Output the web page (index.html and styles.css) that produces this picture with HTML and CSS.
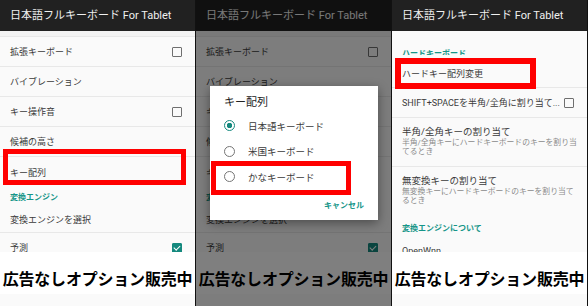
FILE: index.html
```html
<!DOCTYPE html>
<html lang="ja">
<head>
    <meta charset="UTF-8">
    <title>日本語フルキーボード For Tablet</title>
    <link rel="stylesheet" href="styles.css">
</head>
<body>
    <div class="strip">
        <!-- shot 1: settings list -->
        <div class="shot">
            <div class="appbar">日本語フルキーボード For Tablet</div>
            <div class="prefs">
                <div class="spacer"></div>
                <div class="pref">拡張キーボード<span class="check"></span></div>
                <div class="pref">バイブレーション</div>
                <div class="pref">キー操作音<span class="check"></span></div>
                <div class="pref">候補の高さ</div>
                <div class="pref no-line">キー配列</div>
                <div class="category">変換エンジン</div>
                <div class="pref short">変換エンジンを選択</div>
                <div class="pref">予測<span class="check on"></span></div>
            </div>
            <div class="promo">広告なしオプション販売中</div>
            <div class="mark mark-1"></div>
        </div>

        <!-- shot 2: key layout dialog -->
        <div class="shot">
            <div class="appbar">日本語フルキーボード For Tablet</div>
            <div class="prefs">
                <div class="spacer"></div>
                <div class="pref">拡張キーボード<span class="check"></span></div>
                <div class="pref">バイブレーション</div>
                <div class="pref">キー操作音<span class="check"></span></div>
                <div class="pref">候補の高さ</div>
                <div class="pref no-line">キー配列</div>
                <div class="category">変換エンジン</div>
                <div class="pref short">変換エンジンを選択</div>
                <div class="pref">予測<span class="check on"></span></div>
            </div>
            <div class="promo">広告なしオプション販売中</div>
            <div class="scrim"></div>
            <div class="dialog">
                <div class="dialog-title">キー配列</div>
                <div class="choice"><span class="radio on"></span>日本語キーボード</div>
                <div class="choice"><span class="radio"></span>米国キーボード</div>
                <div class="choice"><span class="radio"></span>かなキーボード</div>
                <div class="dialog-actions">キャンセル</div>
            </div>
            <div class="mark mark-2"></div>
        </div>

        <!-- shot 3: hardware keyboard -->
        <div class="shot">
            <div class="appbar">日本語フルキーボード For Tablet</div>
            <div class="prefs">
                <div class="category first">ハードキーボード</div>
                <div class="pref offset">ハードキー配列変更</div>
                <div class="pref">SHIFT+SPACEを半角/全角に割り当て...<span class="check"></span></div>
                <div class="pref tall">
                    <div class="pref-title">半角/全角キーの割り当て</div>
                    <div class="pref-summary">半角/全角キーにハードキーボードのキーを割り当てるとき</div>
                </div>
                <div class="pref tall no-line">
                    <div class="pref-title">無変換キーの割り当て</div>
                    <div class="pref-summary">無変換キーにハードキーボードのキーを割り当てるとき</div>
                </div>
                <div class="category lower">変換エンジンについて</div>
                <div class="pref">OpenWnn</div>
            </div>
            <div class="promo">広告なしオプション販売中</div>
            <div class="mark mark-3"></div>
        </div>
    </div>
</body>
</html>
```

FILE: styles.css
```css
* {
    margin: 0;
    padding: 0;
    box-sizing: border-box;
}

body {
    width: 588px;
    height: 306px;
    overflow: hidden;
    background: #fff;
    font-family: Roboto, "Noto Sans CJK JP", sans-serif;
}

.strip {
    display: flex;
    height: 306px;
}

.shot {
    position: relative;
    width: 196px;
    height: 306px;
    display: flex;
    flex-direction: column;
    border-right: 1px solid #111;
    background: #fafafa;
}

.appbar {
    height: 31px;
    flex: none;
    background: #212121;
    color: #f0f0f0;
    font-size: 11px;
    line-height: 31px;
    padding-left: 10px;
    white-space: nowrap;
}

.prefs {
    height: 221px;
    flex: none;
    overflow: hidden;
    background: #fafafa;
}

.spacer {
    height: 6px;
    background: #f3f3f3;
    border-bottom: 1px solid #e8e8e8;
}

.pref {
    display: flex;
    align-items: center;
    justify-content: space-between;
    height: 30px;
    padding: 0 13px 0 10px;
    border-bottom: 1px solid #e8e8e8;
    font-size: 9px;
    color: #3a3a3a;
    white-space: nowrap;
}

.pref.no-line {
    border-bottom: none;
}

.pref.short {
    height: 26px;
}

.pref.offset {
    height: 33px;
    padding-top: 4px;
}

.pref.tall {
    display: block;
    height: 49px;
    padding: 8px 6px 0 10px;
}

.pref-title {
    font-size: 9.5px;
    line-height: 12px;
    height: 12px;
}

.pref-summary {
    font-size: 7.8px;
    line-height: 9px;
    color: #8a8a8a;
    white-space: normal;
}

.category {
    height: 20px;
    padding: 5px 10px 0;
    font-size: 8px;
    line-height: 12px;
    font-weight: bold;
    color: #159588;
}

.category.first {
    height: 24px;
    padding-top: 17px;
    overflow: hidden;
}

.category.lower {
    height: 20px;
    padding-top: 7px;
}

.check {
    width: 10px;
    height: 10px;
    border: 1.5px solid #6f6f6f;
    border-radius: 1px;
    flex: none;
}

.check.on {
    border-color: #15897e;
    background: #15897e;
    position: relative;
}

.check.on::after {
    content: "";
    position: absolute;
    left: 2px;
    top: 0;
    width: 2.5px;
    height: 5px;
    border: solid #fff;
    border-width: 0 1.5px 1.5px 0;
    transform: rotate(45deg);
}

.promo {
    height: 42px;
    flex: none;
    background: #fff;
    color: #000;
    font-family: "Noto Sans CJK JP", sans-serif;
    font-size: 16px;
    font-weight: bold;
    text-align: center;
    padding-top: 15px;
    line-height: 22px;
    white-space: nowrap;
    letter-spacing: -0.2px;
}

.scrim {
    position: absolute;
    inset: 0;
    background: rgba(0, 0, 0, 0.5);
}

.dialog {
    position: absolute;
    left: 14px;
    top: 86px;
    width: 168px;
    height: 134px;
    background: #fff;
    box-shadow: 0 3px 10px rgba(0, 0, 0, 0.4);
    padding: 9px 14px 0;
}

.dialog-title {
    font-size: 11px;
    line-height: 16px;
    color: #222;
    margin-bottom: 2px;
}

.choice {
    display: flex;
    align-items: center;
    height: 25.5px;
    font-size: 9.5px;
    color: #3a3a3a;
}

.radio {
    width: 11px;
    height: 11px;
    border: 1.5px solid #757575;
    border-radius: 50%;
    margin-right: 13px;
    flex: none;
}

.radio.on {
    border-color: #15897e;
    background: radial-gradient(circle, #15897e 0 2.5px, #fff 3px);
}

.dialog-actions {
    text-align: right;
    font-size: 8px;
    line-height: 12px;
    font-weight: bold;
    color: #159588;
    margin-top: 10px;
}

.mark {
    position: absolute;
    border: 5px solid #ff0000;
}

.mark-1 {
    left: 3px;
    top: 149px;
    width: 183px;
    height: 36px;
}

.mark-2 {
    left: 15px;
    top: 161px;
    width: 140px;
    height: 34px;
}

.mark-3 {
    left: 3px;
    top: 58px;
    width: 141px;
    height: 31px;
    border-width: 6px;
}
```
